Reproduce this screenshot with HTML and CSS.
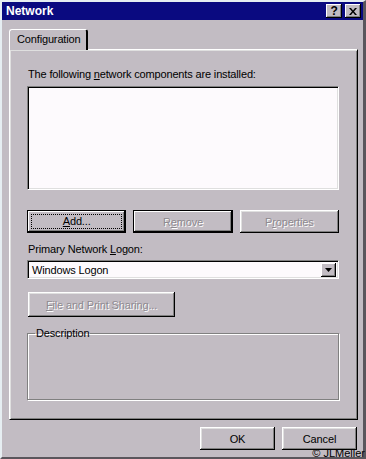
FILE: index.html
```html
<!DOCTYPE html>
<html lang="en">
<head>
    <meta charset="UTF-8">
    <title>Network</title>
    <link rel="stylesheet" href="styles.css">
</head>
<body>
    <div class="window">
        <div class="titlebar">
            <span class="title">Network</span>
            <div class="caption-buttons">
                <span class="cap-btn help">?</span>
                <span class="cap-btn">
                    <svg width="8" height="7" viewBox="0 0 8 7">
                        <path d="M0 0h2l2 2.5L6 0h2L5 3.5 8 7H6L4 4.5 2 7H0l3-3.5z" fill="#000"/>
                    </svg>
                </span>
            </div>
        </div>

        <div class="client">
            <div class="tabs">
                <div class="tab">Configuration</div>
            </div>

            <div class="panel">
                <div class="label">The following <u>n</u>etwork components are installed:</div>
                <div class="listbox"></div>

                <div class="button-row">
                    <button class="btn default"><span class="focus"><u>A</u>dd...</span></button>
                    <button class="btn default" disabled>R<u>e</u>move</button>
                    <button class="btn" disabled>P<u>r</u>operties</button>
                </div>

                <div class="label logon-label">Primary Network <u>L</u>ogon:</div>
                <div class="combo">
                    <span class="combo-text">Windows Logon</span>
                    <span class="drop-btn">
                        <svg width="7" height="4" viewBox="0 0 7 4"><path d="M0 0h7L3.5 4z" fill="#000"/></svg>
                    </span>
                </div>

                <button class="btn share" disabled><u>F</u>ile and Print Sharing...</button>

                <fieldset class="group">
                    <legend>Description</legend>
                </fieldset>
            </div>

            <div class="footer">
                <button class="btn">OK</button>
                <button class="btn">Cancel</button>
            </div>
        </div>

        <span class="credit">© JLMeller</span>
    </div>
</body>
</html>
```

FILE: styles.css
```css
* {
    box-sizing: border-box;
}
body {
    margin: 0;
    font-family: "Liberation Sans", Arial, sans-serif;
    font-size: 11px;
    letter-spacing: -0.15px;
    color: #000;
}
.window {
    position: relative;
    width: 366px;
    height: 459px;
    background: #c2bcc3;
    border-top: 2px solid #e6eef2;
    border-left: 2px solid #e6eef2;
    border-right: 3px solid #5a565c;
    border-bottom: 2px solid #5a565c;
}
.titlebar {
    height: 18px;
    background: #0a0a80;
    display: flex;
    align-items: center;
    justify-content: space-between;
    padding: 0 2px 0 4px;
}
.title {
    color: #fff;
    font-weight: bold;
    font-size: 12px;
    letter-spacing: 0;
}
.caption-buttons {
    display: flex;
    gap: 3px;
}
.cap-btn {
    width: 16px;
    height: 14px;
    background: #c2bcc3;
    box-shadow: inset -1px -1px #000, inset 1px 1px #fff, inset -2px -2px #808080;
    display: flex;
    align-items: center;
    justify-content: center;
    font-weight: bold;
    font-size: 12px;
    line-height: 14px;
}
.client {
    padding: 9px 5px 0 7px;
}
.tabs {
    display: flex;
    height: 21px;
    margin-bottom: -1px;
    position: relative;
    z-index: 1;
}
.tab {
    width: 79px;
    padding: 3px 0 0 7px;
    background: #c2bcc3;
    border-top: 1px solid #fff;
    border-left: 1px solid #fff;
    border-right: 2px solid #000;
    border-radius: 3px 3px 0 0;
}
.panel {
    height: 371px;
    padding: 18px 18px 0 17px;
    border-top: 1px solid #fff;
    border-left: 1px solid #fff;
    border-right: 1px solid #000;
    border-bottom: 1px solid #000;
    box-shadow: inset 1px 1px #dfdfdf, inset -1px -1px #808080;
}
.label {
    height: 13px;
    line-height: 13px;
    margin-left: 1px;
    margin-bottom: 5px;
}
.listbox {
    height: 104px;
    background: #fdfafd;
    border-top: 1px solid #808080;
    border-left: 1px solid #808080;
    border-right: 1px solid #fff;
    border-bottom: 1px solid #fff;
    box-shadow: inset 1px 1px #000, inset -1px -1px #dfdfdf;
}
.button-row {
    display: grid;
    grid-template-columns: repeat(3, 1fr);
    gap: 7px;
    margin-top: 20px;
}
.btn {
    height: 23px;
    padding: 0;
    font-family: inherit;
    font-size: 11px;
    letter-spacing: -0.15px;
    color: #000;
    background: #c2bcc3;
    border: none;
    box-shadow: inset -1px -1px #000, inset 1px 1px #fff, inset -2px -2px #808080, inset 2px 2px #dfdfdf;
}
.btn.default {
    border: 1px solid #000;
    box-shadow: inset -1px -1px #000, inset 1px 1px #fff, inset -2px -2px #808080;
}
.btn:disabled {
    color: #8e8a90;
    text-shadow: 1px 1px #fff;
}
.focus {
    display: block;
    margin: 3px;
    height: 15px;
    line-height: 13px;
    border: 1px dotted #000;
}
.logon-label {
    margin-top: 10px;
    margin-bottom: 4px;
}
.combo {
    height: 19px;
    display: flex;
    align-items: center;
    justify-content: space-between;
    padding: 0 2px 0 4px;
    background: #fdfafd;
    border-top: 1px solid #808080;
    border-left: 1px solid #808080;
    border-right: 1px solid #fff;
    border-bottom: 1px solid #fff;
    box-shadow: inset 1px 1px #000, inset -1px -1px #dfdfdf;
}
.drop-btn {
    width: 15px;
    height: 14px;
    background: #c2bcc3;
    box-shadow: inset -1px -1px #000, inset 1px 1px #fff, inset -2px -2px #808080;
    display: flex;
    align-items: center;
    justify-content: center;
}
.share {
    display: block;
    width: 147px;
    height: 25px;
    margin-top: 13px;
    margin-left: 1px;
}
.group {
    margin: 10px 0 0;
    padding: 0;
    height: 73px;
    border: 1px solid #808080;
    box-shadow: inset 1px 1px #fff, 1px 1px #fff;
}
.group legend {
    margin-left: 7px;
    padding: 0 1px;
    line-height: 13px;
}
.footer {
    display: flex;
    justify-content: flex-end;
    gap: 7px;
    margin-top: 7px;
    padding-right: 1px;
}
.footer .btn {
    width: 75px;
}
.credit {
    position: absolute;
    right: -2px;
    bottom: -2px;
    font-size: 11px;
    line-height: 11px;
    letter-spacing: 0;
    color: #000;
}
```
